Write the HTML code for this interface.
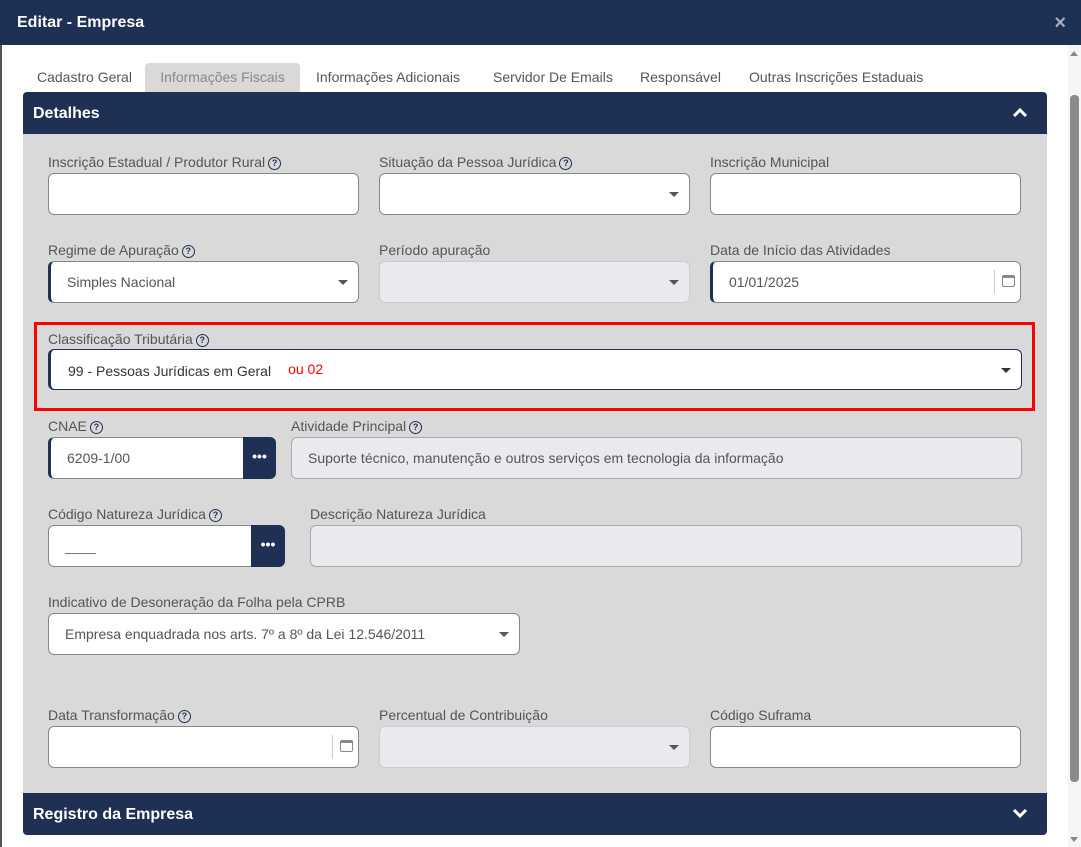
<!DOCTYPE html>
<html><head><meta charset="utf-8"><style>
*{box-sizing:border-box;margin:0;padding:0}
body{width:1081px;height:847px;overflow:hidden;background:#fff;font-family:"Liberation Sans",sans-serif;position:relative;color:#555}
.a{position:absolute}
.hdr{left:0;top:0;width:1081px;height:45px;background:#1f3055;color:#fff;font-weight:bold;font-size:16px;padding:14px 0 0 17px}
.lb{position:absolute;font-size:14px;color:#555;white-space:nowrap}
.q{display:inline-block;width:13px;height:13px;border:1.3px solid #1f3055;border-radius:50%;font-size:9px;font-weight:bold;color:#1f3055;text-align:center;line-height:11px;vertical-align:1px;margin-left:3px}
.in{position:absolute;height:42px;background:#fff;border:1px solid #888;border-radius:6px;font-size:14px;color:#555;padding:0 16px;line-height:40px;white-space:nowrap}
.dis{background:#e8eaed;border-color:#ccc}
.lft{border-left:3px solid #1f3055}
.car{position:absolute;right:10px;top:18px;width:0;height:0;border-left:5px solid transparent;border-right:5px solid transparent;border-top:5px solid #555}
.btn{position:absolute;height:42px;background:#1f3055;border-radius:0 6px 6px 0;color:#fff;font-weight:bold;text-align:center;line-height:38px;font-size:14px}
.tab{position:absolute;top:63px;height:29px;font-size:14px;color:#555;line-height:29px}
.cal{position:absolute;right:0;top:8px;height:24px;width:26px;border-left:1px solid #ccc}
.cal i{position:absolute;left:7px;top:5px;width:13px;height:12px;border:1.5px solid #888;border-top-width:3px;border-radius:2px}
</style></head><body>
<div class="a" style="left:0;top:0;width:2px;height:847px;background:#555"></div>
<div class="a hdr">Editar - Empresa</div>
<div class="a" style="right:15px;top:12px;color:#aab;font-size:20px;font-weight:bold">×</div>
<div class="a" style="left:1068px;top:45px;width:13px;height:802px;background:#f5f5f5"></div>
<div class="a" style="left:1070px;top:95px;width:9px;height:687px;background:#8a8a8a;border-radius:4px"></div>
<div class="a" style="left:1070px;top:51px;border-left:4px solid transparent;border-right:4px solid transparent;border-bottom:5px solid #888"></div>
<div class="a" style="left:1070px;top:837px;border-left:4px solid transparent;border-right:4px solid transparent;border-top:5px solid #888"></div>

<div class="tab" style="left:37px">Cadastro Geral</div>
<div class="tab" style="left:145px;width:155px;background:#d9d9d9;border-radius:4px 4px 0 0;text-align:center;color:#888">Informações Fiscais</div>
<div class="tab" style="left:316px">Informações Adicionais</div>
<div class="tab" style="left:493px">Servidor De Emails</div>
<div class="tab" style="left:640px">Responsável</div>
<div class="tab" style="left:749px">Outras Inscrições Estaduais</div>

<div class="a" style="left:23px;top:92px;width:1024px;height:42px;background:#1f3055;border-radius:4px 4px 0 0;color:#fff;font-weight:bold;font-size:16px;padding:13px 0 0 10px">Detalhes</div>
<svg class="a" style="left:1012px;top:107px" width="16" height="11"><path d="M2 9 L8 3 L14 9" stroke="#fff" stroke-width="3" fill="none"/></svg>
<div class="a" style="left:23px;top:134px;width:1024px;height:659px;background:#d9d9d9"></div>
<div class="a" style="left:23px;top:793px;width:1024px;height:42px;background:#1f3055;border-radius:0 0 4px 4px;color:#fff;font-weight:bold;font-size:16px;padding:13px 0 0 10px">Registro da Empresa</div>
<svg class="a" style="left:1012px;top:808px" width="16" height="11"><path d="M2 2 L8 8 L14 2" stroke="#fff" stroke-width="3" fill="none"/></svg>

<div class="lb" style="left:48px;top:154px">Inscrição Estadual / Produtor Rural<span class="q">?</span></div>
<div class="lb" style="left:379px;top:154px">Situação da Pessoa Jurídica<span class="q">?</span></div>
<div class="lb" style="left:710px;top:154px">Inscrição Municipal</div>
<div class="in" style="left:48px;top:173px;width:311px"></div>
<div class="in" style="left:379px;top:173px;width:311px"><span class="car"></span></div>
<div class="in" style="left:710px;top:173px;width:311px"></div>

<div class="lb" style="left:48px;top:242px">Regime de Apuração<span class="q">?</span></div>
<div class="lb" style="left:379px;top:242px">Período apuração</div>
<div class="lb" style="left:710px;top:242px">Data de Início das Atividades</div>
<div class="in lft" style="left:48px;top:261px;width:311px">Simples Nacional<span class="car"></span></div>
<div class="in dis" style="left:379px;top:261px;width:311px"><span class="car"></span></div>
<div class="in lft" style="left:710px;top:261px;width:311px">01/01/2025<span class="cal"><i></i></span></div>

<div class="a" style="left:34px;top:322px;width:1001px;height:89px;border:3px solid #f00"></div>
<div class="lb" style="left:48px;top:331px">Classificação Tributária<span class="q">?</span></div>
<div class="in lft" style="left:48px;top:349px;width:974px;height:41px;color:#333;border-color:#1f3055;padding-left:17px;line-height:38px">99 - Pessoas Jurídicas em Geral<span style="color:#f00;font-size:14px;margin-left:17px;vertical-align:2px">ou 02</span><span class="car" style="border-top-color:#333"></span></div>

<div class="lb" style="left:48px;top:418px">CNAE<span class="q">?</span></div>
<div class="lb" style="left:291px;top:418px">Atividade Principal<span class="q">?</span></div>
<div class="in lft" style="left:48px;top:437px;width:200px;border-radius:6px 0 0 6px">6209-1/00</div>
<div class="btn" style="left:243px;top:437px;width:33px">•••</div>
<div class="in dis" style="left:291px;top:437px;width:731px;border-color:#aaa">Suporte técnico, manutenção e outros serviços em tecnologia da informação</div>

<div class="lb" style="left:48px;top:506px">Código Natureza Jurídica<span class="q">?</span></div>
<div class="lb" style="left:310px;top:506px">Descrição Natureza Jurídica</div>
<div class="in" style="left:48px;top:525px;width:208px;border-radius:6px 0 0 6px"><span style="position:absolute;left:16px;top:27px;width:31px;height:1px;background:#777"></span></div>
<div class="btn" style="left:251px;top:525px;width:34px">•••</div>
<div class="in dis" style="left:310px;top:525px;width:712px;border-color:#aaa"></div>

<div class="lb" style="left:48px;top:594px">Indicativo de Desoneração da Folha pela CPRB</div>
<div class="in" style="left:48px;top:613px;width:472px">Empresa enquadrada nos arts. 7º a 8º da Lei 12.546/2011<span class="car"></span></div>

<div class="lb" style="left:48px;top:707px">Data Transformação<span class="q">?</span></div>
<div class="lb" style="left:379px;top:707px">Percentual de Contribuição</div>
<div class="lb" style="left:710px;top:707px">Código Suframa</div>
<div class="in" style="left:48px;top:726px;width:311px"><span class="cal"><i></i></span></div>
<div class="in dis" style="left:379px;top:726px;width:311px"><span class="car"></span></div>
<div class="in" style="left:710px;top:726px;width:311px"></div>
</body></html>
